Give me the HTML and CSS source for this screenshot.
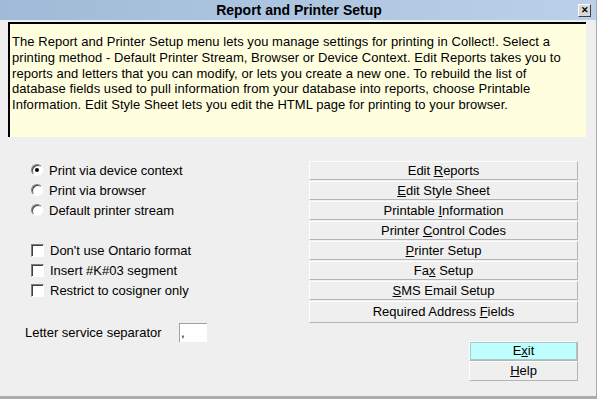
FILE: index.html
```html
<!DOCTYPE html>
<html>
<head>
<meta charset="utf-8">
<link rel="stylesheet" href="styles.css">
</head>
<body>
<div class="window">
  <div class="titlebar">
    <span class="title">Report and Printer Setup</span>
    <span class="close">&#x2715;</span>
  </div>
  <div class="info">The Report and Printer Setup menu lets you manage settings for printing in Collect!. Select a<br>printing method - Default Printer Stream, Browser or Device Context. Edit Reports takes you to<br>reports and letters that you can modify, or lets you create a new one. To rebuild the list of<br>database fields used to pull information from your database into reports, choose Printable<br>Information. Edit Style Sheet lets you edit the HTML page for printing to your browser.</div>
  <div class="main">
    <div class="left">
      <div class="opt"><span class="radio checked"></span>Print via device context</div>
      <div class="opt"><span class="radio"></span>Print via browser</div>
      <div class="opt"><span class="radio"></span>Default printer stream</div>
      <div class="opt gap"><span class="check"></span>Don't use Ontario format</div>
      <div class="opt"><span class="check"></span>Insert #K#03 segment</div>
      <div class="opt"><span class="check"></span>Restrict to cosigner only</div>
      <div class="sep-row"><span class="sep-label">Letter service separator</span><span class="field">,</span></div>
    </div>
    <div class="right">
      <div class="btn">Edit <u>R</u>eports</div>
      <div class="btn"><u>E</u>dit Style Sheet</div>
      <div class="btn">Printable <u>I</u>nformation</div>
      <div class="btn">Printer <u>C</u>ontrol Codes</div>
      <div class="btn"><u>P</u>rinter Setup</div>
      <div class="btn">Fa<u>x</u> Setup</div>
      <div class="btn"><u>S</u>MS Email Setup</div>
      <div class="btn tall">Required Address <u>F</u>ields</div>
      <div class="small-btns">
        <div class="btn small exit">E<u>x</u>it</div>
        <div class="btn small"><u>H</u>elp</div>
      </div>
    </div>
  </div>
</div>
</body>
</html>
```
FILE: styles.css
```css
html, body {
  margin: 0;
  padding: 0;
}
body {
  font-family: "Liberation Sans", Arial, sans-serif;
  font-size: 13px;
  color: #000;
}
.window {
  width: 597px;
  height: 399px;
  box-sizing: border-box;
  background: #efefef;
  border-right: 1px solid #a8a8a8;
  border-bottom: 3px solid #acacac;
  display: flex;
  flex-direction: column;
}
.titlebar {
  height: 20px;
  flex: none;
  background: linear-gradient(to right, #a0bad7, #bad1e9);
  position: relative;
  display: flex;
  align-items: center;
  justify-content: center;
}
.title {
  font-weight: bold;
  font-size: 14px;
  padding-left: 2px;
}
.close {
  position: absolute;
  right: 5px;
  top: 4px;
  width: 11px;
  height: 11px;
  background: #d8d8d8;
  border-top: 1px solid #fff;
  border-left: 1px solid #fff;
  border-right: 1px solid #404040;
  border-bottom: 1px solid #404040;
  font-size: 9px;
  font-weight: bold;
  line-height: 11px;
  text-align: center;
}
.info {
  margin: 2px 10px 0 8px;
  height: 115px;
  box-sizing: border-box;
  background: #ffffe0;
  border-top: 2px solid #000;
  border-left: 2px solid #000;
  padding: 10px 2px 0 2px;
  line-height: 15.8px;
  letter-spacing: 0.05px;
  white-space: nowrap;
  overflow: hidden;
}
.main {
  display: grid;
  grid-template-columns: 309px 269px;
  padding-top: 23px;
}
.left {
  display: flex;
  flex-direction: column;
  padding-left: 31px;
}
.opt {
  height: 20px;
  display: flex;
  align-items: center;
  gap: 6px;
}
.opt.gap {
  margin-top: 20px;
}
.radio {
  width: 10px;
  height: 10px;
  border-radius: 50%;
  border: 1px solid;
  border-color: #808080 #fff #fff #808080;
  box-shadow: inset 1px 1px 0 #404040;
  background: #fff;
  position: relative;
  flex: none;
}
.radio.checked::after {
  content: "";
  position: absolute;
  left: 3px;
  top: 3px;
  width: 4px;
  height: 4px;
  border-radius: 50%;
  background: #000;
}
.check {
  width: 11px;
  height: 11px;
  border: 1px solid;
  border-color: #808080 #fff #fff #808080;
  box-shadow: inset 1px 1px 0 #404040;
  background: #fff;
  flex: none;
}
.sep-row {
  display: flex;
  align-items: center;
  margin-top: 22px;
  margin-left: -6px;
  height: 20px;
}
.sep-label {
  width: 154px;
}
.field {
  width: 26px;
  height: 18px;
  background: #fff;
  border-top: 1px solid #a0a0a0;
  border-left: 1px solid #a0a0a0;
  line-height: 18px;
  padding-left: 1px;
  box-sizing: content-box;
}
.right {
  display: flex;
  flex-direction: column;
  padding-top: 1px;
}
.btn {
  height: 19px;
  box-sizing: border-box;
  border-top: 1px solid #fff;
  border-left: 1px solid #fff;
  border-right: 1px solid #b4b4b4;
  border-bottom: 1px solid #b4b4b4;
  text-align: center;
  line-height: 17px;
  margin-bottom: 1px;
  background: #efefef;
}
.btn.tall {
  height: 22px;
  line-height: 20px;
}
.small-btns {
  margin-top: 17px;
  margin-left: 160px;
  display: flex;
  flex-direction: column;
}
.btn.small {
  height: 20px;
  line-height: 18px;
  margin-bottom: 0;
}
.btn.exit {
  background: #c0ffff;
  box-shadow: inset 0 0 0 1px #a8c8c8;
}
u {
  text-underline-offset: 1px;
}
```
